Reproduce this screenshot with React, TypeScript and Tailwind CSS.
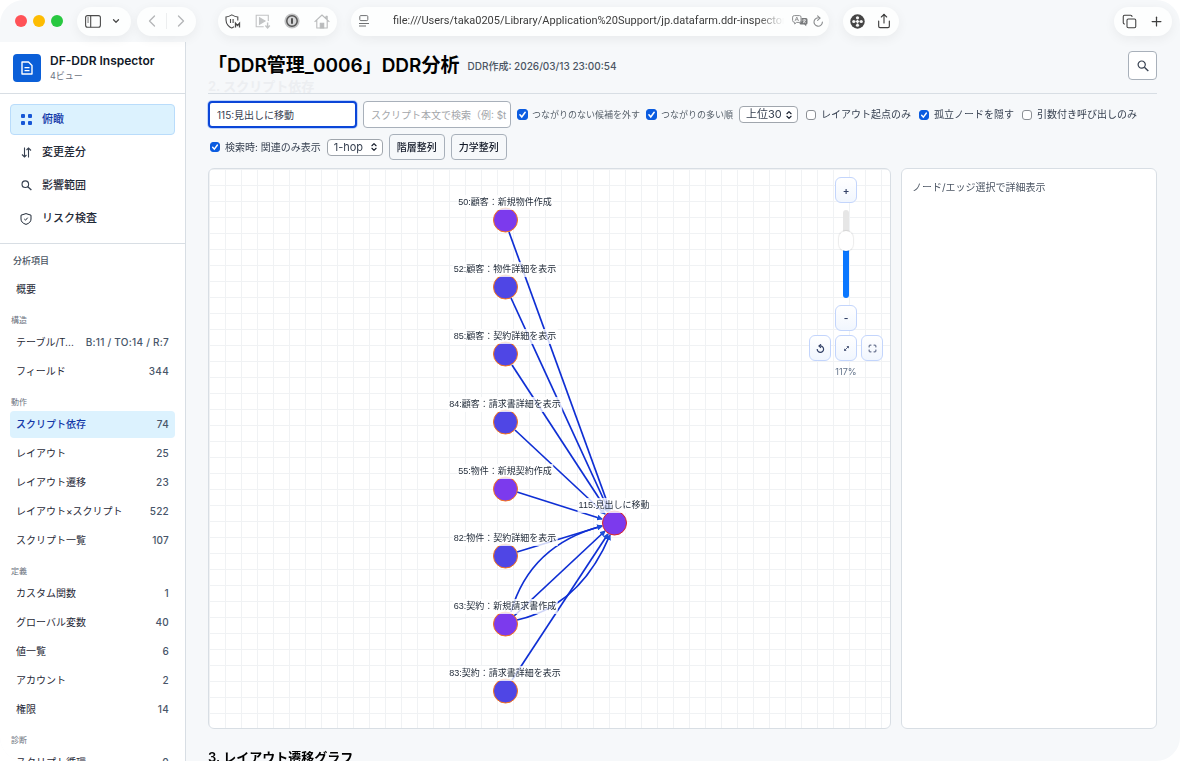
import { useEffect, useRef, useState } from 'react';
import type { ReactNode } from 'react';
import { ChevronDown, ChevronLeft, ChevronRight, ChevronsUpDown, Copy, Maximize, Plus, Share } from 'lucide-react';

type MenuItem = { label: string; count?: string };
type MenuGroup = { title: string; items: MenuItem[] };

const menuGroups: MenuGroup[] = [
  {
    title: '構造',
    items: [
      { label: 'テーブル/T...', count: 'B:11 / TO:14 / R:7' },
      { label: 'フィールド', count: '344' },
    ],
  },
  {
    title: '動作',
    items: [
      { label: 'スクリプト依存', count: '74' },
      { label: 'レイアウト', count: '25' },
      { label: 'レイアウト遷移', count: '23' },
      { label: 'レイアウト×スクリプト', count: '522' },
      { label: 'スクリプト一覧', count: '107' },
    ],
  },
  {
    title: '定義',
    items: [
      { label: 'カスタム関数', count: '1' },
      { label: 'グローバル変数', count: '40' },
      { label: '値一覧', count: '6' },
      { label: 'アカウント', count: '2' },
      { label: '権限', count: '14' },
    ],
  },
  {
    title: '診断',
    items: [{ label: 'スクリプト循環', count: '0' }],
  },
];

type GraphNode = { label: string; x: number; y: number; fill: string; stroke: string };

const PURPLE = '#7c3aed';
const INDIGO = '#4f46e5';

const nodes: GraphNode[] = [
  { label: '50:顧客：新規物件作成', x: 296, y: 51, fill: PURPLE, stroke: '#f97316' },
  { label: '52:顧客：物件詳細を表示', x: 296, y: 118, fill: INDIGO, stroke: '#f97316' },
  { label: '85:顧客：契約詳細を表示', x: 296, y: 185, fill: INDIGO, stroke: '#f97316' },
  { label: '84:顧客：請求書詳細を表示', x: 296, y: 253, fill: INDIGO, stroke: '#f97316' },
  { label: '55:物件：新規契約作成', x: 296, y: 320, fill: PURPLE, stroke: '#f97316' },
  { label: '82:物件：契約詳細を表示', x: 296, y: 387, fill: INDIGO, stroke: '#f97316' },
  { label: '63:契約：新規請求書作成', x: 296, y: 455, fill: PURPLE, stroke: '#f97316' },
  { label: '83:契約：請求書詳細を表示', x: 296, y: 522, fill: INDIGO, stroke: '#f97316' },
  { label: '115:見出しに移動', x: 405, y: 354, fill: PURPLE, stroke: '#dc2626' },
];

const edges = [
  'M300 63 L401 341',
  'M302 129 L400 342',
  'M303 196 L399 343',
  'M306 261 L396 345',
  'M308 323 L393 350',
  'M308 383 L393 357',
  'M302 443 Q321 376 393 357',
  'M305 447 L396 362',
  'M308 451 Q371 437 401 366',
  'M303 511 L399 365',
];

export default function App() {
  return (
    <div className="h-screen overflow-hidden bg-white font-[Inter,'Noto_Sans_CJK_JP',sans-serif] text-[#111827]">
      <div className="flex h-full flex-col overflow-hidden rounded-3xl bg-[#f6f8fa]">
        <BrowserBar />
        <div className="flex min-h-0 flex-1">
          <Sidebar />
          <main className="min-w-0 flex-1 overflow-hidden pl-[22px] pr-[23px]">
            <PageHeader />
            <Filters />
            <div className="mt-2 flex gap-[10px]">
              <GraphCanvas />
              <aside className="w-64 shrink-0 rounded-md border border-[#d8dee4] bg-white px-[10px] py-2 text-[10px] leading-5 text-[#4b5563]">
                ノード/エッジ選択で詳細表示
              </aside>
            </div>
            <h2 className="mt-5 text-[13px] font-semibold leading-4 text-black">3. レイアウト遷移グラフ</h2>
          </main>
        </div>
      </div>
    </div>
  );
}

function Pill({ className, children }: { className?: string; children: ReactNode }) {
  return (
    <div
      className={`flex h-[29px] items-center rounded-full bg-[#fdfefe] shadow-[0_3px_12px_rgba(0,0,0,0.06)] ${className || ''}`}
    >
      {children}
    </div>
  );
}

function BrowserBar() {
  return (
    <div className="z-10 flex h-[42px] shrink-0 items-center pl-[15px] pr-2">
      <div className="flex gap-[6px]">
        <span className="size-3 rounded-full bg-[#ff5257]" />
        <span className="size-3 rounded-full bg-[#fdbc02]" />
        <span className="size-3 rounded-full bg-[#28c840]" />
      </div>
      <Pill className="ml-[14px] w-[54px] justify-between pl-2 pr-[10px] text-[#4b4b4b]">
        <button aria-label="サイドバー">
          <svg className="h-[13px] w-4" viewBox="0 0 16 13" fill="none" stroke="currentColor">
            <rect x="0.6" y="0.6" width="14.8" height="11.6" rx="2" strokeWidth="1.1" />
            <path d="M5.7 0.6v11.6" strokeWidth="1.1" />
            <path d="M2.2 3h1.8M2.2 5h1.8M2.2 7h1.8" strokeWidth="0.8" />
          </svg>
        </button>
        <button aria-label="タブグループ">
          <ChevronDown className="size-[10px]" strokeWidth={3} />
        </button>
      </Pill>
      <Pill className="ml-[6px] w-[59px] justify-between px-[5px] text-[#b4b6b8]">
        <button aria-label="戻る">
          <ChevronLeft className="size-5" strokeWidth={1.6} />
        </button>
        <span className="h-4 w-px bg-[#eceeef]" />
        <button aria-label="進む">
          <ChevronRight className="size-5" strokeWidth={1.6} />
        </button>
      </Pill>
      <Pill className="ml-[22px] w-[119px] justify-between px-[7px]">
        <button aria-label="シールド">
          <svg className="h-[15px] w-4" viewBox="0 0 16 15" fill="none" stroke="#4a4a4a" strokeWidth="1.1">
            <path d="M9 12.6C8.2 13.4 7.3 13.9 6.7 14 4.5 13.3 1 10.5 1 6V3C3.5 2.9 5 2 6.8 0.9 8.6 2 10.4 2.900 12.8 3V6.500" />
            <path d="M5.500 5v4M8.100 5v4" />
            <path d="M10.500 13.500V9.200l2 2.300 2-2.300v4.300" strokeWidth="1.3" />
          </svg>
        </button>
        <button aria-label="動画">
          <svg className="h-[15px] w-4" viewBox="0 0 16 15" fill="none" stroke="#c2c4c5" strokeWidth="1.1">
            <path d="M13.3 7V1.2H1.2v11.600h7.500" />
            <path d="M4.500 3.800v6.400l5.500-3.200z" fill="#c2c4c5" />
            <path d="M12.600 8.500v5M10.400 11.500l2.200 2.400 2.200-2.400" strokeWidth="1.4" />
          </svg>
        </button>
        <button aria-label="パスワード">
          <svg className="size-4" viewBox="0 0 16 16" fill="none">
            <circle cx="8" cy="8" r="7.6" fill="#c3c4c5" />
            <circle cx="8" cy="8" r="5.2" fill="#d5d6d7" stroke="#555" strokeWidth="1.5" />
            <path d="M8 5.2v5.600" stroke="#444" strokeWidth="1.8" />
          </svg>
        </button>
        <button aria-label="ホーム">
          <svg className="h-[15px] w-4" viewBox="0 0 16 15" fill="none" stroke="#b9bbbc" strokeWidth="1.1">
            <path d="M0.600 7.800L8 1l7.400 6.800M2.800 6v8h10.400V6M12 4.300V2.200h1.200v3.200" strokeLinejoin="round" />
            <path d="M6.300 14V9.300h3.400V14z" fill="#b9bbbc" />
          </svg>
        </button>
      </Pill>
      <Pill className="ml-[14px] min-w-0 flex-[13] pl-2 pr-[5px] text-[#6f7173]">
        <svg className="h-3 w-[10px] shrink-0" viewBox="0 0 10 12" fill="none" stroke="currentColor">
          <rect x="0.8" y="0.6" width="8" height="5" rx="1" />
          <path d="M0 8.500h10M0 11h7" />
        </svg>
        <p className="ml-6 min-w-0 flex-1 overflow-hidden whitespace-nowrap font-[Roboto,sans-serif] text-[11px] leading-4 text-[#3c3c3c] [mask-image:linear-gradient(to_right,black_93%,transparent)]">
          file:///Users/taka0205/Library/Application%20Support/jp.datafarm.ddr-inspector/
        </p>
        <button aria-label="翻訳" className="ml-2">
          <svg className="h-3 w-4" viewBox="0 0 16 12" fill="none">
            <path
              d="M2.500 0.600h5q1.500 0 1.500 1.500v3.800q0 1.500-1.500 1.500H4.500L2.700 9V7.300Q0.600 7.300 0.600 5.500V2.100q0-1.500 1.900-1.500z"
              stroke="#8b8d8f"
            />
            <path d="M3 6l1.800-4 1.800 4M3.600 4.700h2.400" stroke="#8b8d8f" strokeWidth="0.8" />
            <path
              d="M9.500 3h4.500q1.500 0 1.500 1.500V8q0 1.500-1.300 1.500v1.700L12.300 9.500H9Q7.500 9.500 7.500 8V7.500h.5Q9.500 7.300 9.500 5.500z"
              fill="#77797b"
            />
            <path
              d="M10.600 5h3.400M12.300 4.200V5M13.400 5q-.6 2-2.400 3M11.200 5.500q.8 1.800 2.600 2.400"
              stroke="white"
              strokeWidth="0.7"
            />
          </svg>
        </button>
        <button aria-label="再読み込み" className="ml-1">
          <svg className="size-3" viewBox="0 0 12 12" fill="none" stroke="#8b8d8f" strokeWidth="1.1" strokeLinecap="round">
            <path d="M7.800 3.100A4.200 4.200 0 1 0 10.400 7" />
            <path d="M5.600 0.800L8 3.100 5.600 5.300" strokeLinejoin="round" />
          </svg>
        </button>
      </Pill>
      <Pill className="ml-[14px] w-[56px] justify-between px-[7px] text-[#3f3f3f]">
        <button aria-label="拡張機能">
          <svg className="size-[15px]" viewBox="0 0 16 16" fill="#454545">
            <circle cx="8" cy="8" r="7.7" />
            <g fill="#f5f5f5">
              <circle cx="8" cy="4" r="1.7" />
              <circle cx="8" cy="12" r="1.7" />
              <circle cx="4" cy="8" r="1.7" />
              <circle cx="12" cy="8" r="1.7" />
              <path d="M7.200 6h1.600v4H7.200zM6 7.200h4v1.600H6z" />
            </g>
          </svg>
        </button>
        <button aria-label="共有">
          <Share className="size-4" strokeWidth={1.7} />
        </button>
      </Pill>
      <div className="flex-[6]" />
      <Pill className="w-[58px] justify-between px-2 text-[#3f3f3f]">
        <button aria-label="タブ一覧">
          <Copy className="size-[15px]" strokeWidth={1.7} />
        </button>
        <button aria-label="新規タブ">
          <Plus className="size-[15px]" strokeWidth={2} />
        </button>
      </Pill>
    </div>
  );
}

function GridDots() {
  return (
    <svg className="size-[11px]" viewBox="0 0 11 11" fill="#1757d6">
      <rect width="4" height="4" rx="1" />
      <rect x="7" width="4" height="4" rx="1" />
      <rect y="7" width="4" height="4" rx="1" />
      <rect x="7" y="7" width="4" height="4" rx="1" />
    </svg>
  );
}

function DownUp() {
  return (
    <svg className="size-[11px]" viewBox="0 0 11 11" fill="none" stroke="#374151" strokeWidth="1.1">
      <path d="M3.500 0.500v9.500M1 7.500L3.500 10 5.500 8M7.500 10.500V1M5.500 3L7.500 1 10 3.500" />
    </svg>
  );
}

function Glass({ className }: { className?: string }) {
  return (
    <svg className={className} viewBox="0 0 12 12" fill="none" stroke="#374151" strokeWidth="1.2">
      <circle cx="4.700" cy="4.600" r="3.600" />
      <path d="M7.400 7.300L11.300 11" strokeWidth="1.400" />
    </svg>
  );
}

function ShieldCheck() {
  return (
    <svg className="size-3" viewBox="0 0 12 12" fill="none" stroke="currentColor">
      <path d="M6 0.600L11 2.200V6Q11 9.800 6 11.400 1 9.800 1 6V2.200z" />
      <path d="M4.300 6l1.200 1.200 2.200-2.500" />
    </svg>
  );
}

function Sidebar() {
  const views = [
    { label: '俯瞰', icon: <GridDots /> },
    { label: '変更差分', icon: <DownUp /> },
    { label: '影響範囲', icon: <Glass className="size-[11px]" /> },
    { label: 'リスク検査', icon: <ShieldCheck /> },
  ];

  return (
    <aside className="flex w-[186px] shrink-0 flex-col overflow-hidden border-r border-[#d8dee4] bg-white">
      <div className="flex h-[52px] shrink-0 items-center border-b border-[#d8dee4] pl-[13px]">
        <div className="flex size-7 items-center justify-center rounded bg-[#0b5fd8]">
          <svg className="h-[14px] w-3" viewBox="0 0 12 14" fill="none" stroke="white" strokeWidth="1.4">
            <path d="M1 1h6.500L11 4.500V13H1z" strokeLinejoin="round" />
            <path d="M3.500 6.700h5M3.500 9.600h5" strokeWidth="1.2" />
          </svg>
        </div>
        <div className="ml-[9px]">
          <p className="text-[12px] font-semibold leading-4">DF-DDR Inspector</p>
          <p className="text-[9px] leading-[14px] text-[#6b7280]">4ビュー</p>
        </div>
      </div>
      <nav className="flex shrink-0 flex-col gap-[2px] border-b border-[#d8dee4] px-[10px] pb-[9px] pt-[10px]">
        {views.map((view, i) => (
          <button
            key={view.label}
            className={`flex h-[31px] items-center gap-[10px] rounded border pl-[9px] text-left text-[11px] font-medium ${
              i === 0 ? 'border-[#b9dcfb] bg-[#dcf2fe] text-[#1338a8]' : 'border-transparent text-[#1f2937]'
            }`}
          >
            <span className="flex w-3 justify-center">{view.icon}</span>
            {view.label}
          </button>
        ))}
      </nav>
      <nav className="px-[10px] pt-[9px]">
        <p className="px-[3px] text-[9px] font-medium leading-4 text-[#4b5563]">分析項目</p>
        <div className="mt-[7px]">
          <MenuRow item={{ label: '概要' }} />
        </div>
        {menuGroups.map((group) => (
          <div key={group.title} className="mt-[10px]">
            <p className="px-px text-[8px] leading-[14px] text-[#6b7280]">{group.title}</p>
            <div className="mt-[2px] flex flex-col gap-[2px]">
              {group.items.map((item) => (
                <MenuRow key={item.label} item={item} active={item.label === 'スクリプト依存'} />
              ))}
            </div>
          </div>
        ))}
      </nav>
    </aside>
  );
}

function MenuRow({ item, active }: { item: MenuItem; active?: boolean }) {
  return (
    <a
      href="#"
      className={`flex h-[27px] items-center justify-between gap-2 rounded px-[6px] text-[10px] ${
        active ? 'bg-[#dcf2fe] font-medium text-[#1338a8]' : 'text-[#1f2937]'
      }`}
    >
      <span className="truncate">{item.label}</span>
      {item.count && <span className="shrink-0 font-medium tracking-wide text-[#475569]">{item.count}</span>}
    </a>
  );
}

function PageHeader() {
  return (
    <header className="relative flex h-[52px] items-center border-b border-[#d8dee4] pb-1">
      <p className="absolute left-0 top-9 text-[13px] font-semibold leading-4 text-[#eceef1]">2. スクリプト依存</p>
      <h1 className="relative text-[19px] font-semibold leading-6 text-black">「DDR管理_0006」DDR分析</h1>
      <p className="relative ml-2 text-[10px] font-medium leading-4 text-[#4b5563]">DDR作成: 2026/03/13 23:00:54</p>
      <button
        aria-label="検索"
        className="ml-auto flex size-[29px] items-center justify-center rounded border border-[#a8b0ba] bg-white"
      >
        <Glass className="size-3" />
      </button>
    </header>
  );
}

function Checkbox({
  label,
  defaultChecked,
  small,
}: {
  label: string;
  defaultChecked?: boolean;
  small?: boolean;
}) {
  return (
    <label
      className={`flex items-center whitespace-nowrap ${
        small ? 'gap-1 text-[9px] text-[#57606a]' : 'ml-[2px] gap-[5px] text-[10px] text-[#374151]'
      }`}
    >
      <span className="relative flex">
        <input
          type="checkbox"
          defaultChecked={defaultChecked}
          className={`peer appearance-none rounded-[3px] border border-[#8b8f94] bg-white checked:border-[#0b5ce0] checked:bg-[#0b5ce0] ${
            small ? 'size-[11px]' : 'size-[10px]'
          }`}
        />
        <svg
          className="pointer-events-none absolute inset-0 hidden size-full peer-checked:block"
          viewBox="0 0 12 12"
          fill="none"
          stroke="white"
          strokeWidth="1.7"
          strokeLinecap="round"
        >
          <path d="M3.200 6.300l2 2.300 3.700-5" />
        </svg>
      </span>
      {label}
    </label>
  );
}

function Dropdown({ label, options, className }: { label: string; options: string[]; className?: string }) {
  return (
    <span className={`relative flex items-center ${className || ''}`}>
      <select
        aria-label={label}
        className="h-[17px] w-full appearance-none rounded border border-[#a0a6ad] bg-white pl-[6px] text-[11px] leading-[15px] text-[#374151]"
      >
        {options.map((option) => (
          <option key={option}>{option}</option>
        ))}
      </select>
      <ChevronsUpDown className="pointer-events-none absolute right-1 size-[10px]" strokeWidth={2.6} />
    </span>
  );
}

function Filters() {
  const searchRef = useRef<HTMLInputElement>(null);

  useEffect(() => {
    const el = searchRef.current;
    el?.focus();
    el?.setSelectionRange(el.value.length, el.value.length);
  }, []);

  return (
    <div className="mt-[7px] flex flex-wrap items-center gap-[6px]">
      <input
        ref={searchRef}
        aria-label="スクリプト名で検索"
        defaultValue="115:見出しに移動"
        className="h-[27px] w-[149px] rounded border-2 border-[#0b46d8] bg-white px-[7px] text-[10px] text-[#374151] shadow-[0_0_0_1px_#bfd4fb] outline-none"
      />
      <input
        aria-label="スクリプト本文で検索"
        placeholder="スクリプト本文で検索（例: $t"
        className="h-[27px] w-[148px] rounded border border-[#a8b0ba] bg-white pl-[7px] pr-px text-[10px] outline-none placeholder:text-[#a3a6aa]"
      />
      <Checkbox small defaultChecked label="つながりのない候補を外す" />
      <Checkbox small defaultChecked label="つながりの多い順" />
      <Dropdown label="表示件数" options={['上位30', '上位50', '上位100']} className="w-[59px]" />
      <Checkbox label="レイアウト起点のみ" />
      <Checkbox defaultChecked label="孤立ノードを隠す" />
      <Checkbox label="引数付き呼び出しのみ" />
      <Checkbox defaultChecked label="検索時: 関連のみ表示" />
      <Dropdown label="ホップ数" options={['1-hop', '2-hop', '3-hop']} className="w-14" />
      <button className="h-[26px] w-14 rounded border border-[#a8b0ba] bg-[#f6f8fa] text-[10px] font-medium">
        階層整列
      </button>
      <button className="h-[26px] w-14 rounded border border-[#a8b0ba] bg-[#f6f8fa] text-[10px] font-medium">
        力学整列
      </button>
    </div>
  );
}

function GraphCanvas() {
  return (
    <section className="relative h-[561px] min-w-0 flex-1 overflow-hidden rounded-md border border-[#d8dee4] bg-white bg-[linear-gradient(#f0f2f4_1px,transparent_1px),linear-gradient(90deg,#f0f2f4_1px,transparent_1px)] bg-[size:16px_16px]">
      <svg className="absolute inset-0 size-full">
        <defs>
          <marker
            id="arrow"
            viewBox="0 0 6 6"
            refX="5"
            refY="3"
            markerWidth="6"
            markerHeight="6"
            markerUnits="userSpaceOnUse"
            orient="auto"
          >
            <path d="M0 0L6 3L0 6z" fill="#1d4ed8" />
          </marker>
        </defs>
        {edges.map((d) => (
          <path key={d} d={d} fill="none" stroke="#0f2fd4" strokeWidth="1.7" markerEnd="url(#arrow)" />
        ))}
        {nodes.map((node) => (
          <circle key={node.label} cx={node.x + 0.5} cy={node.y} r="12" fill={node.fill} stroke={node.stroke} />
        ))}
      </svg>
      {nodes.map((node) => (
        <span
          key={node.label}
          className="absolute -translate-x-1/2 -translate-y-[25px] whitespace-nowrap bg-white/80 px-px font-['Liberation_Sans','Noto_Sans_CJK_JP',sans-serif] text-[9px] leading-[15px] text-[#1f2937]"
          style={{ left: node.x, top: node.y }}
        >
          {node.label}
        </span>
      ))}
      <ZoomControls />
    </section>
  );
}

function ZoomButton({ label, children, onClick }: { label: string; children: ReactNode; onClick?: () => void }) {
  return (
    <button
      aria-label={label}
      onClick={onClick}
      className="flex h-[26px] w-[22px] items-center justify-center rounded-md border border-[#c3d5fc] bg-linear-to-b from-white to-[#f1f6fe] text-[10px] font-semibold leading-none text-[#334167]"
    >
      {children}
    </button>
  );
}

function ZoomControls() {
  const [zoom, setZoom] = useState(117);

  return (
    <div className="absolute right-[7px] top-2 flex flex-col items-center">
      <ZoomButton label="拡大" onClick={() => setZoom(zoom + 1)}>
        +
      </ZoomButton>
      <input
        type="range"
        aria-label="ズーム"
        min={20}
        max={160}
        value={zoom}
        onChange={(e) => setZoom(Number(e.target.value))}
        className="mb-[7px] mt-[7px] h-[88px] w-[14px] appearance-none bg-transparent [direction:rtl] [writing-mode:vertical-lr] [&::-webkit-slider-runnable-track]:h-full [&::-webkit-slider-runnable-track]:w-[6px] [&::-webkit-slider-runnable-track]:rounded-full [&::-webkit-slider-runnable-track]:bg-[linear-gradient(#e6e6e6_31px,#0a77ff_31px)] [&::-webkit-slider-thumb]:-ml-1 [&::-webkit-slider-thumb]:h-5 [&::-webkit-slider-thumb]:w-[14px] [&::-webkit-slider-thumb]:appearance-none [&::-webkit-slider-thumb]:rounded-full [&::-webkit-slider-thumb]:bg-white [&::-webkit-slider-thumb]:shadow-[0_0_1px_1px_rgba(0,0,0,0.08)]"
      />
      <ZoomButton label="縮小" onClick={() => setZoom(zoom - 1)}>
        -
      </ZoomButton>
      <div className="mt-1 flex gap-1">
        <ZoomButton label="リセット" onClick={() => setZoom(100)}>
          <svg className="size-[9px]" viewBox="0 0 9 9" fill="none" stroke="currentColor" strokeWidth="1.2">
            <path d="M1.200 5A3.200 3.200 0 1 0 4 2" />
            <path d="M5 0.300L3 2l2 1.700" />
          </svg>
        </ZoomButton>
        <ZoomButton label="全体表示">
          <svg className="size-[5px]" viewBox="0 0 5 5" fill="none" stroke="currentColor" strokeWidth="0.8">
            <path d="M0.500 4.500l4-4M2.800 0.500h1.700v1.700M0.500 2.800v1.700h1.700" />
          </svg>
        </ZoomButton>
        <ZoomButton label="全画面">
          <Maximize className="size-[9px]" strokeWidth={2.4} />
        </ZoomButton>
      </div>
      <p className="mt-1 text-[9px] leading-[14px] text-[#64748b]">{zoom}%</p>
    </div>
  );
}
